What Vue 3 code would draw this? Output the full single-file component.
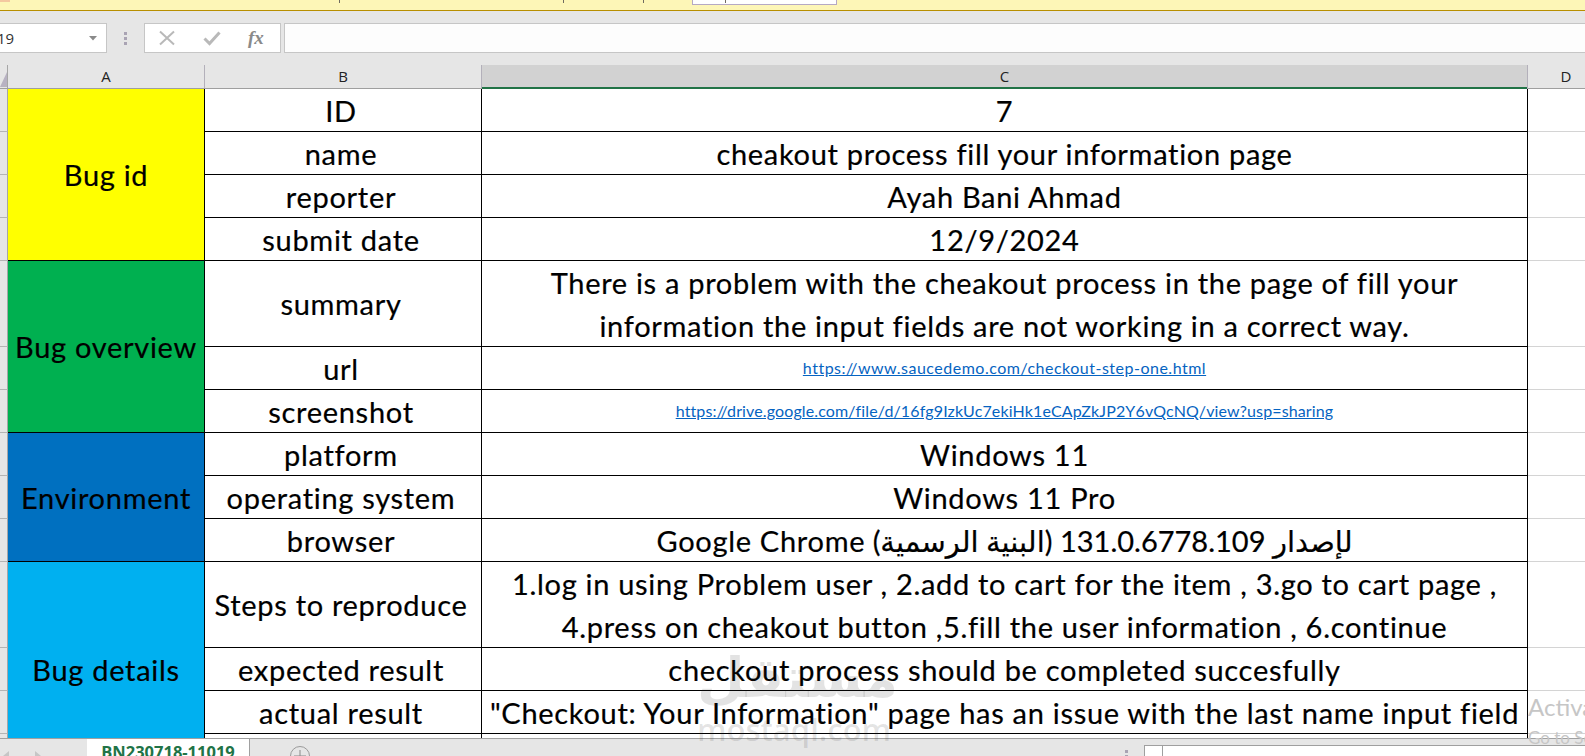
<script setup>
const letters = [
  { key: 'A', cls: '' },
  { key: 'B', cls: '' },
  { key: 'C', cls: 'selected' },
  { key: 'D', cls: 'last' },
]

const rows = [
  { label: 'ID', value: ['7'], group: { name: 'Bug id', span: 4, cls: 'yellow' } },
  { label: 'name', value: ['cheakout process fill your information page'] },
  { label: 'reporter', value: ['Ayah Bani Ahmad'] },
  { label: 'submit date', value: ['12/9/2024'] },
  {
    label: 'summary',
    tall: true,
    value: [
      'There is a problem with the cheakout process in the page of fill your',
      'information the input fields are not working in a correct way.',
    ],
    group: { name: 'Bug overview', span: 3, cls: 'green' },
  },
  { label: 'url', link: 'https://www.saucedemo.com/checkout-step-one.html', linkCls: 'link-a' },
  { label: 'screenshot', link: 'https://drive.google.com/file/d/16fg9IzkUc7ekiHk1eCApZkJP2Y6vQcNQ/view?usp=sharing', linkCls: 'link-b' },
  { label: 'platform', value: ['Windows 11'], group: { name: 'Environment', span: 3, cls: 'blue' } },
  { label: 'operating system', value: ['Windows 11 Pro'] },
  { label: 'browser', rtl: 'لإصدار 131.0.6778.109 (البنية الرسمية) Google Chrome' },
  {
    label: 'Steps to reproduce',
    tall: true,
    value: [
      '1.log in using Problem user , 2.add to cart for the item , 3.go to cart page ,',
      '4.press on cheakout button ,5.fill the user information , 6.continue',
    ],
    group: { name: 'Bug details', span: 4, cls: 'sky' },
  },
  { label: 'expected result', value: ['checkout process should be completed succesfully'] },
  { label: 'actual result', value: ['"Checkout: Your Information" page has an issue with the last name input field'] },
  { label: '', value: [''] },
]
</script>

<template>
  <div class="app">
    <div class="notice">
      <i class="flag"></i>
      <i class="tick tick-a"></i>
      <i class="tick tick-b"></i>
      <i class="tick tick-c"></i>
      <div class="enable"><i class="tick tick-d"></i></div>
    </div>

    <div class="formula">
      <div class="namebox">
        <span class="ref">19</span>
        <svg class="caret" width="9" height="5" viewBox="0 0 9 5"><path d="M0 0h8L4 4.500z" fill="#8a8a8a" /></svg>
      </div>
      <div class="grip"><i></i><i></i><i></i></div>
      <div class="fnbox">
        <svg width="18" height="16" viewBox="0 0 18 16" class="ico-x">
          <path d="M2 1.500 16 14.500M16 1.500 2 14.500" stroke="#b9b9b9" stroke-width="2" fill="none" />
        </svg>
        <svg width="18" height="16" viewBox="0 0 18 16" class="ico-check">
          <path d="M1.500 8.500 6.500 13.500 16.500 2.500" stroke="#b9b9b9" stroke-width="3" fill="none" />
        </svg>
        <span class="fx">fx</span>
      </div>
      <div class="input"></div>
    </div>

    <div class="colhead">
      <div class="corner"><svg width="7" height="16" viewBox="0 0 7 16"><path d="M7 0v15H0z" fill="#b8b2c2" /></svg></div>
      <div v-for="c in letters" :key="c.key" class="col" :class="c.cls">{{ c.key }}</div>
    </div>

    <div class="sheet">
      <table>
        <colgroup>
          <col class="w-r" /><col class="w-a" /><col class="w-b" /><col class="w-c" /><col class="w-d" />
        </colgroup>
        <tbody>
          <tr v-for="(r, i) in rows" :key="i" :class="{ tall: r.tall }">
            <td class="rowhead"></td>
            <td v-if="r.group" class="group" :class="r.group.cls" :rowspan="r.group.span">{{ r.group.name }}</td>
            <td class="cell label"><div class="line">{{ r.label }}</div></td>
            <td class="cell">
              <div v-if="r.link" class="line link-line"><a class="link" :class="r.linkCls">{{ r.link }}</a></div>
              <div v-else-if="r.rtl" class="line" dir="rtl">{{ r.rtl }}</div>
              <template v-else>
                <div v-for="(line, k) in r.value" :key="k" class="line">{{ line }}</div>
              </template>
            </td>
            <td class="blank"></td>
          </tr>
        </tbody>
      </table>
    </div>

    <div class="tabs">
      <div class="nav">
        <svg width="8" height="12" viewBox="0 0 8 12"><path d="M7 1v10L1 6z" fill="#c6c6c6" /></svg>
        <svg width="8" height="12" viewBox="0 0 8 12"><path d="M1 1v10l6-5z" fill="#c6c6c6" /></svg>
      </div>
      <div class="tab">BN230718-11019</div>
      <div class="add"><svg width="22" height="22" viewBox="0 0 22 22"><circle cx="11" cy="11" r="9.500" fill="none" stroke="#9a9a9a" /><path d="M11 5v12M5 11h12" stroke="#8a8a8a" /></svg></div>
      <div class="spacer"></div>
      <div class="grip small"><i></i><i></i></div>
      <div class="scroll">
        <div class="arrow"><svg width="7" height="10" viewBox="0 0 7 10"><path d="M6 0v10L0 5z" fill="#444" /></svg></div>
      </div>
    </div>

    <div class="watermark">
      <div class="wm-ar">مستقل</div>
      <div class="wm-en">mostaql.com</div>
    </div>
    <div class="activate">
      <div class="a1">Activate Windows</div>
      <div class="a2">Go to Settings to activate Windows.</div>
    </div>
  </div>
</template>

<style>
html, body { margin: 0; overflow: hidden; background: #fff; }
</style>

<style scoped>
.app {
  position: relative;
  width: 1585px;
  height: 756px;
  overflow: hidden;
  display: flex;
  flex-direction: column;
  background: #e6e6e6;
  font-family: Lato, "DejaVu Sans", sans-serif;
  color: #000;
}

/* protected view strip */
.notice {
  position: relative;
  flex: 0 0 11px;
  box-sizing: border-box;
  background: #fdf6b7;
  border-bottom: 1px solid #b88f00;
}
.flag { position: absolute; left: 0; top: 0; width: 10px; height: 2px; background: #f4c8a0; }
.tick { position: absolute; top: 0; width: 1px; height: 3px; background: #6f6a60; }
.tick-a { left: 339px; }
.tick-b { left: 563px; }
.tick-c { left: 643px; }
.enable {
  position: absolute;
  left: 692px;
  top: -1px;
  width: 145px;
  height: 6px;
  box-sizing: border-box;
  background: #fff;
  border: 1px solid #b5a9c4;
}
.tick-d { left: 32px; top: 0; }

/* formula bar */
.formula {
  flex: 0 0 54px;
  min-height: 0;
  display: flex;
  align-items: flex-start;
  padding-top: 12px;
  box-sizing: border-box;
}
.namebox {
  width: 107px;
  height: 30px;
  box-sizing: border-box;
  display: flex;
  align-items: center;
  justify-content: space-between;
  padding-right: 8px;
  background: #fff;
  border: 1px solid #c6c6c6;
  border-left: 0;
  font-family: "Open Sans", sans-serif;
  font-size: 15px;
  color: #333;
}
.ref { margin-left: -3px; }
.grip {
  width: 37px;
  height: 30px;
  display: flex;
  flex-direction: column;
  align-items: center;
  justify-content: center;
  gap: 2px;
}
.grip i { width: 3px; height: 3px; background: #a9a3b3; flex: none; }
.fnbox {
  width: 137px;
  height: 30px;
  box-sizing: border-box;
  display: flex;
  align-items: center;
  background: #fff;
  border: 1px solid #c6c6c6;
}
.ico-x { margin-left: 13px; }
.ico-check { margin-left: 27px; }
.fx {
  margin-left: 27px;
  font-family: "Liberation Serif", serif;
  font-style: italic;
  font-weight: 700;
  font-size: 19px;
  color: #8a8a8a;
}
.input {
  flex: 1;
  height: 30px;
  margin-left: 3px;
  box-sizing: border-box;
  background: #fdfdfd;
  border: 1px solid #c6c6c6;
  border-right: 0;
}

/* column headers */
.colhead {
  flex: 0 0 24px;
  min-height: 0;
  display: grid;
  grid-template-columns: 8px 197px 277px 1046px 57px;
  box-sizing: border-box;
  border-bottom: 1px solid #9f9f9f;
}
.corner {
  box-sizing: border-box;
  border-right: 1px solid #a6a6a6;
  display: flex;
  align-items: flex-end;
  overflow: hidden;
}
.col {
  box-sizing: border-box;
  display: flex;
  align-items: center;
  justify-content: center;
  padding-bottom: 2px;
  border-right: 1px solid #b3b0ba;
  font-family: "Open Sans", sans-serif;
  font-size: 15px;
  color: #222;
}
.col.selected {
  background: #d2d2d2;
  box-shadow: inset 0 -2px 0 #217346;
  margin-bottom: -1px;
  padding-bottom: 3px;
}
.col.last { border-right: 0; padding-left: 19px; }

/* grid */
.sheet {
  flex: 1;
  min-height: 0;
  overflow: hidden;
  background: #fff;
}
table {
  width: 1585px;
  table-layout: fixed;
  border-collapse: separate;
  border-spacing: 0;
}
.w-r { width: 8px; }
.w-a { width: 197px; }
.w-b { width: 277px; }
.w-c { width: 1046px; }
.w-d { width: 57px; }
tr { height: 43px; }
tr.tall { height: 86px; }
td {
  padding: 0;
  box-sizing: border-box;
  text-align: center;
  vertical-align: middle;
  white-space: nowrap;
  font-size: 29px;
  letter-spacing: 0.700px;
  -webkit-text-stroke: 0.200px #000;
  overflow: hidden;
}
.line {
  height: 42px;
  line-height: 44px;
  overflow: hidden;
}
.tall .line { height: 42.500px; line-height: 44.500px; }
.label { padding-right: 4px; }
.link-line {
  line-height: 42px;
  font-size: 16px;
  -webkit-text-stroke: 0;
}
.rowhead {
  background: #e6e6e6;
  border-right: 1px solid #a6a6a6;
  border-bottom: 1px solid #b4b4b4;
}
.cell, .group {
  border-right: 1px solid #000;
  border-bottom: 1px solid #000;
}
.blank { border-bottom: 1px solid #d4d4d4; }
.yellow { background: #ffff00; }
.green { background: #00b050; }
.blue { background: #0070c0; }
.sky { background: #00b0f0; }
.link {
  color: #0563c1;
  text-decoration: underline;
}
.link-a { letter-spacing: 0.500px; }
.link-b { letter-spacing: 0.130px; }

/* sheet tabs */
.tabs {
  flex: 0 0 18px;
  min-height: 0;
  overflow: hidden;
  box-sizing: border-box;
  display: flex;
  align-items: flex-start;
  border-top: 1px solid #a0a0a0;
  background: #e6e6e6;
}
.nav {
  width: 87px;
  box-sizing: border-box;
  padding: 11px 0 0 2px;
  display: flex;
  gap: 24px;
  flex: none;
}
.tab {
  flex: none;
  width: 163px;
  height: 18px;
  box-sizing: border-box;
  background: #fff;
  border-right: 1px solid #a0a0a0;
  text-align: center;
  font-family: "Open Sans", sans-serif;
  font-weight: 700;
  font-size: 16.500px;
  line-height: 25px;
  color: #217346;
}
.add { margin-left: 39px; padding-top: 6px; flex: none; }
.spacer { flex: 1; }
.grip.small { width: 3px; height: auto; margin: 11px 16px 0 0; flex: none; }
.scroll {
  flex: none;
  width: 441px;
  height: 14px;
  margin-top: 6px;
  box-sizing: border-box;
  border: 1px solid #9f9f9f;
  border-right: 0;
  background: #fff;
  overflow: hidden;
}
.arrow {
  width: 18px;
  height: 14px;
  box-sizing: border-box;
  border-right: 1px solid #9f9f9f;
  padding: 5px 0 0 6px;
}

/* overlays */
.watermark {
  position: absolute;
  left: 697px;
  top: 644px;
  width: 190px;
  text-align: center;
  color: rgba(40, 40, 40, 0.13);
  pointer-events: none;
}
.wm-ar {
  font-family: "DejaVu Sans", sans-serif;
  font-weight: 700;
  font-size: 55px;
  line-height: 68px;
}
.wm-en {
  font-family: "Open Sans", sans-serif;
  font-weight: 600;
  font-size: 31px;
  line-height: 34px;
  white-space: nowrap;
}
.activate {
  position: absolute;
  left: 1528px;
  top: 691px;
  width: 400px;
  color: #c6c6c6;
  font-family: Lato, sans-serif;
  white-space: nowrap;
}
.a1 { font-size: 24px; line-height: 32px; }
.a2 { font-size: 17px; line-height: 30px; }
</style>
